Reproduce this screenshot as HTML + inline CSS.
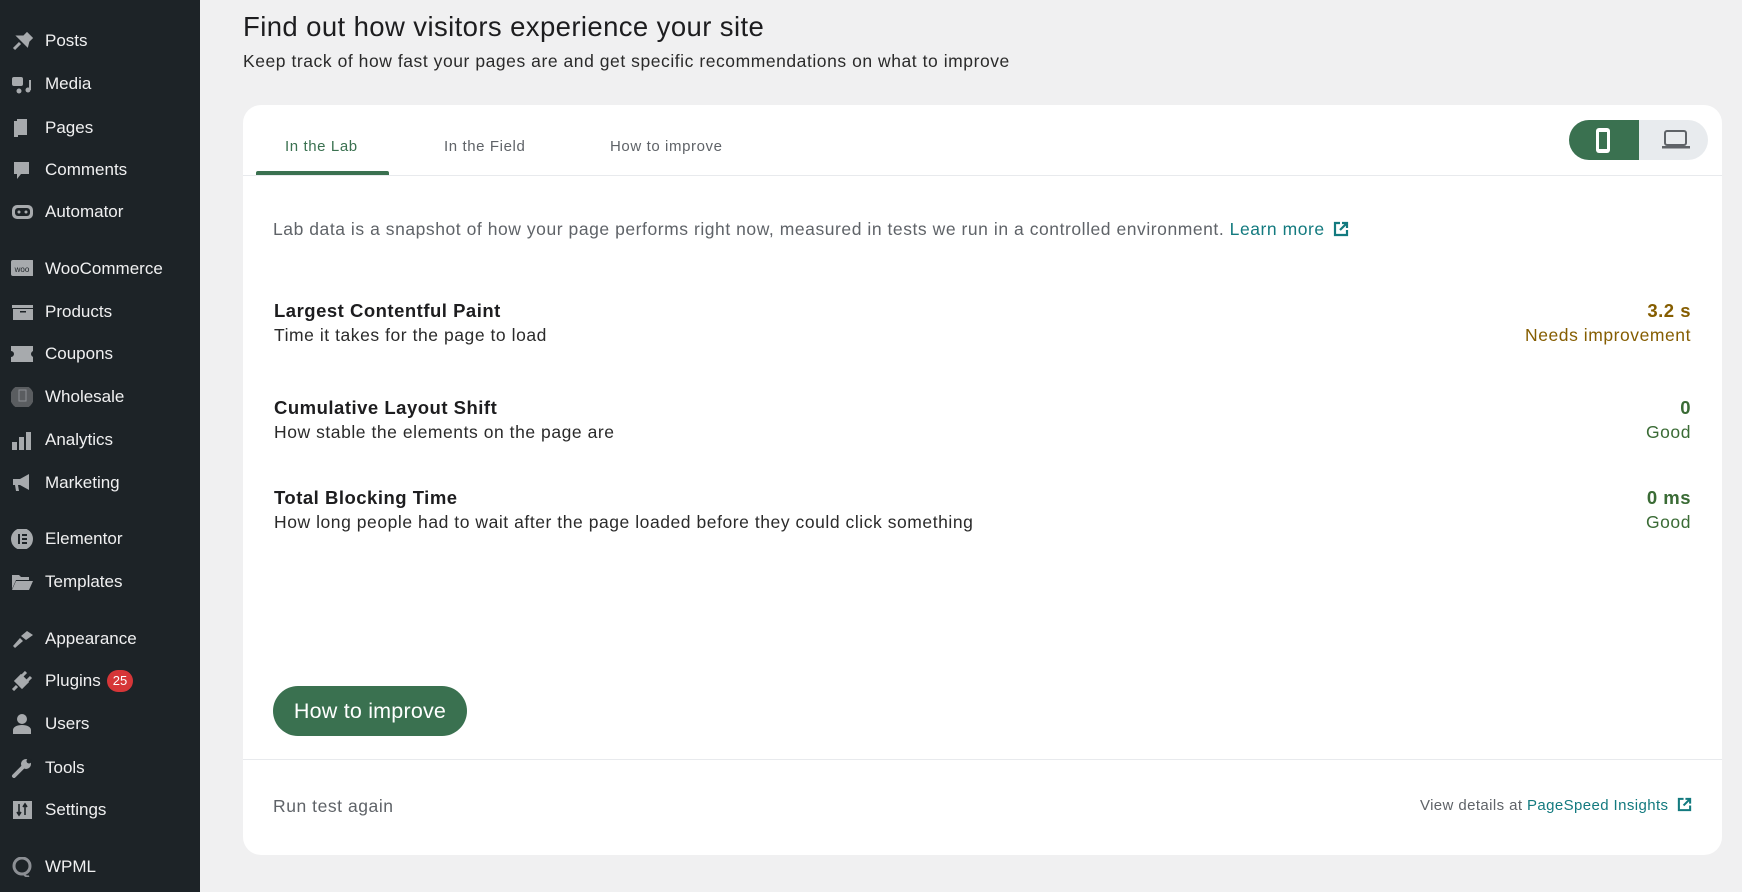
<!DOCTYPE html>
<html><head><meta charset="utf-8"><style>
*{margin:0;padding:0;box-sizing:border-box}
body{width:1742px;height:892px;overflow:hidden;background:#f0f0f1;font-family:"Liberation Sans",sans-serif;position:relative}
#sb{position:absolute;left:0;top:0;width:200px;height:892px;background:#1d2327}
.mi{position:absolute;left:0;height:30px;width:200px;color:#f0f0f1;font-size:17px;line-height:30px}
.mi span.t{position:absolute;left:45px;top:0}
.mi .ic{position:absolute;left:11px;top:5px;width:22px;height:20px}
.badge{display:inline-block;background:#d63638;color:#fff;border-radius:12px;font-size:13px;line-height:22px;height:22px;padding:0 6px;margin-left:6px;vertical-align:1px}
.abs{position:absolute;white-space:nowrap}
#card{position:absolute;left:243px;top:105px;width:1479px;height:750px;background:#fff;border-radius:18px}
.b{font-size:17.5px;letter-spacing:0.55px}
.h{font-size:18.5px;font-weight:bold;letter-spacing:0.5px}
</style></head><body>
<div id="sb">
<div class="mi" style="top:26px"><svg class="ic" viewBox="0 0 22 20"><path d="M3 18l6-6M8 6l8 8 1-4 3-3-4-4-3 3z" stroke="#a7aaad" stroke-width="3" fill="#a7aaad"/></svg><span class="t">Posts</span></div>
<div class="mi" style="top:69px"><svg class="ic" viewBox="0 0 22 20"><rect x="1" y="3" width="11" height="9" rx="2" fill="#a7aaad"/><circle cx="8" cy="17" r="2.5" fill="#a7aaad"/><circle cx="17" cy="16" r="2.5" fill="#a7aaad"/><rect x="18" y="6" width="2" height="10" fill="#a7aaad"/></svg><span class="t">Media</span></div>
<div class="mi" style="top:113px"><svg class="ic" viewBox="0 0 22 20"><rect x="3" y="3" width="4" height="16" fill="#a7aaad"/><rect x="6" y="1" width="10" height="16" fill="#a7aaad"/></svg><span class="t">Pages</span></div>
<div class="mi" style="top:155px"><svg class="ic" viewBox="0 0 22 20"><path d="M3 2h15v12H10l-4 5v-5H3z" fill="#a7aaad"/></svg><span class="t">Comments</span></div>
<div class="mi" style="top:197px"><svg class="ic" viewBox="0 0 22 20"><rect x="1" y="3" width="21" height="14" rx="5" fill="#a7aaad"/><rect x="4" y="6" width="15" height="8" rx="3" fill="#1d2327"/><circle cx="8" cy="10" r="1.5" fill="#a7aaad"/><circle cx="15" cy="10" r="1.5" fill="#a7aaad"/></svg><span class="t">Automator</span></div>
<div class="mi" style="top:254px"><svg class="ic" viewBox="0 0 22 20"><rect x="0" y="1" width="23" height="16" rx="2" fill="#a7aaad"/><text x="11" y="13" font-size="8" text-anchor="middle" fill="#1d2327" font-family="Liberation Sans">woo</text></svg><span class="t">WooCommerce</span></div>
<div class="mi" style="top:297px"><svg class="ic" viewBox="0 0 22 20"><rect x="1" y="3" width="22" height="3" fill="#a7aaad"/><rect x="2" y="7" width="20" height="11" fill="#a7aaad"/><rect x="9" y="9" width="6" height="1.5" fill="#1d2327"/></svg><span class="t">Products</span></div>
<div class="mi" style="top:339px"><svg class="ic" viewBox="0 0 22 20"><path d="M0 2h23v5a3 3 0 000 6v5H0v-5a3 3 0 000-6z" fill="#a7aaad"/></svg><span class="t">Coupons</span></div>
<div class="mi" style="top:382px"><svg class="ic" viewBox="0 0 22 20"><circle cx="11" cy="10" r="12" fill="#5a5d60"/><rect x="8" y="3" width="7" height="11" fill="none" stroke="#8c8f94"/></svg><span class="t">Wholesale</span></div>
<div class="mi" style="top:425px"><svg class="ic" viewBox="0 0 22 20"><rect x="1" y="12" width="5" height="8" fill="#a7aaad"/><rect x="8" y="7" width="5" height="13" fill="#a7aaad"/><rect x="15" y="2" width="5" height="18" fill="#a7aaad"/></svg><span class="t">Analytics</span></div>
<div class="mi" style="top:468px"><svg class="ic" viewBox="0 0 22 20"><path d="M2 6h7l9-5v16L9 12H7l1 6H5l-1-6H2z" fill="#a7aaad"/></svg><span class="t">Marketing</span></div>
<div class="mi" style="top:524px"><svg class="ic" viewBox="0 0 22 20"><circle cx="11" cy="10" r="11" fill="#a7aaad"/><rect x="7" y="5" width="2" height="10" fill="#1d2327"/><rect x="11" y="5" width="5" height="2" fill="#1d2327"/><rect x="11" y="9" width="5" height="2" fill="#1d2327"/><rect x="11" y="13" width="5" height="2" fill="#1d2327"/></svg><span class="t">Elementor</span></div>
<div class="mi" style="top:567px"><svg class="ic" viewBox="0 0 22 20"><path d="M1 3h7l2 2h8v3H5L1 17z M5 9h17l-4 9H1z" fill="#a7aaad"/></svg><span class="t">Templates</span></div>
<div class="mi" style="top:624px"><svg class="ic" viewBox="0 0 22 20"><path d="M2 17l7-8 3 3-8 7z M10 7l6-5 6 4-7 5z" fill="#a7aaad"/></svg><span class="t">Appearance</span></div>
<div class="mi" style="top:666px"><svg class="ic" viewBox="0 0 22 20"><path d="M2 19l4-4 M5 10l6 6 5-5-6-6z M11 5l4-4 M16 10l4-4" stroke="#a7aaad" stroke-width="3" fill="#a7aaad"/></svg><span class="t">Plugins<span class="badge">25</span></span></div>
<div class="mi" style="top:709px"><svg class="ic" viewBox="0 0 22 20"><circle cx="11" cy="5" r="5" fill="#a7aaad"/><path d="M2 20v-4c0-3 4-5 9-5s9 2 9 5v4z" fill="#a7aaad"/></svg><span class="t">Users</span></div>
<div class="mi" style="top:753px"><svg class="ic" viewBox="0 0 22 20"><path d="M3 18L13 8" stroke="#a7aaad" stroke-width="4" stroke-linecap="round"/><circle cx="15" cy="6" r="5" fill="#a7aaad"/><circle cx="18" cy="3" r="2.5" fill="#1d2327"/></svg><span class="t">Tools</span></div>
<div class="mi" style="top:795px"><svg class="ic" viewBox="0 0 22 20"><rect x="2" y="1" width="19" height="18" fill="#a7aaad"/><path d="M8 4v11M6 12l2 3 2-3M14 15V4M12 7l2-3 2 3" stroke="#1d2327" stroke-width="1.6" fill="none"/></svg><span class="t">Settings</span></div>
<div class="mi" style="top:852px"><svg class="ic" viewBox="0 0 22 20"><circle cx="11" cy="9" r="8" fill="none" stroke="#8c8f94" stroke-width="3"/><path d="M13 16c0 3 3 4 5 3" stroke="#8c8f94" stroke-width="2" fill="none"/></svg><span class="t">WPML</span></div>
</div>

<div class="abs" style="left:243px;top:11px;font-size:27.5px;letter-spacing:0.4px;color:#1d1d1f">Find out how visitors experience your site</div>
<div class="abs b" style="left:243px;top:51px;color:#2a2a2a">Keep track of how fast your pages are and get specific recommendations on what to improve</div>

<div id="card">
<div class="abs" style="left:0;top:70px;width:1479px;height:1px;background:#e8eaed"></div>
<div class="abs" style="left:42px;top:33px;font-size:15px;letter-spacing:0.6px;color:#3a7150">In the Lab</div>
<div class="abs" style="left:13px;top:66px;width:133px;height:4px;background:#3a7150;border-radius:2px 2px 0 0"></div>
<div class="abs" style="left:201px;top:33px;font-size:15px;letter-spacing:0.6px;color:#5f6368">In the Field</div>
<div class="abs" style="left:367px;top:33px;font-size:15px;letter-spacing:0.6px;color:#5f6368">How to improve</div>
<div class="abs" style="left:1326px;top:15px;width:139px;height:40px;border-radius:20px;background:#e8ebee;overflow:hidden">
 <div style="position:absolute;left:0;top:0;width:70px;height:40px;background:#3a7150"></div>
 <svg style="position:absolute;left:25px;top:7px" width="18" height="27" viewBox="0 0 18 27"><rect x="2" y="1" width="14" height="25" rx="3" fill="#fff"/><rect x="5" y="5" width="8" height="17" fill="#3a7150"/></svg>
 <svg style="position:absolute;left:92px;top:9px" width="30" height="22" viewBox="0 0 30 22"><rect x="4" y="2" width="21" height="14" rx="2" fill="none" stroke="#5f6368" stroke-width="2"/><rect x="1" y="17" width="28" height="2.5" fill="#5f6368"/></svg>
</div>

<div class="abs b" style="left:30px;top:114px;color:#5f6368">Lab data is a snapshot of how your page performs right now, measured in tests we run in a controlled environment. <span style="color:#137a7f">Learn more</span> <svg width="16" height="16" viewBox="0 0 16 16" style="vertical-align:-2px;margin-left:3px"><path d="M7 2H2v12h12V9M9 2h5v5M14 2L7 9" stroke="#137a7f" stroke-width="2.2" fill="none"/></svg></div>

<div class="abs h" style="left:31px;top:195px;color:#1d1d1f">Largest Contentful Paint</div>
<div class="abs b" style="left:31px;top:220px;color:#2a2a2a">Time it takes for the page to load</div>
<div class="abs h" style="right:31px;top:195px;color:#855d00">3.2 s</div>
<div class="abs b" style="right:31px;top:220px;color:#855d00">Needs improvement</div>

<div class="abs h" style="left:31px;top:292px;color:#1d1d1f">Cumulative Layout Shift</div>
<div class="abs b" style="left:31px;top:317px;color:#2a2a2a">How stable the elements on the page are</div>
<div class="abs h" style="right:31px;top:292px;color:#3a6b35">0</div>
<div class="abs b" style="right:31px;top:317px;color:#3a6b35">Good</div>

<div class="abs h" style="left:31px;top:382px;color:#1d1d1f">Total Blocking Time</div>
<div class="abs b" style="left:31px;top:407px;color:#2a2a2a">How long people had to wait after the page loaded before they could click something</div>
<div class="abs h" style="right:31px;top:382px;color:#3a6b35">0 ms</div>
<div class="abs b" style="right:31px;top:407px;color:#3a6b35">Good</div>

<div class="abs" style="left:30px;top:581px;width:194px;height:50px;border-radius:25px;background:#3a7150;color:#fff;font-size:21.5px;letter-spacing:0.2px;line-height:50px;text-align:center">How to improve</div>
<div class="abs" style="left:0;top:654px;width:1479px;height:1px;background:#e8eaed"></div>
<div class="abs b" style="left:30px;top:691px;color:#5f6368">Run test again</div>
<div class="abs" style="right:30px;top:692px;font-size:15px;letter-spacing:0.4px;color:#5f6368">View details at <span style="color:#137a7f">PageSpeed Insights</span> <svg width="15" height="15" viewBox="0 0 16 16" style="vertical-align:-2px;margin-left:4px"><path d="M7 2H2v12h12V9M9 2h5v5M14 2L7 9" stroke="#137a7f" stroke-width="2.2" fill="none"/></svg></div>
</div>
</body></html>
